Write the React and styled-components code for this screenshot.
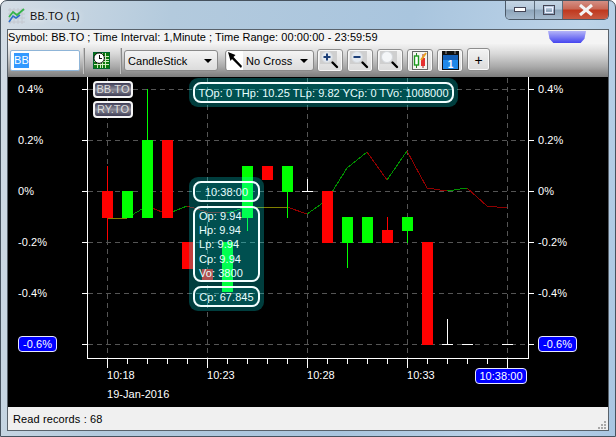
import React from "react";
import styled, { createGlobalStyle } from "styled-components";

const Global = createGlobalStyle`
  html, body { margin: 0; padding: 0; background: #fff; }
  * { box-sizing: border-box; }
`;

const uiFont = `"Liberation Sans", Arial, sans-serif`;

const Win = styled.div`
  width: 616px; height: 437px; display: flex; flex-direction: column;
  padding: 0 6px 5px; overflow: hidden;
  border: 1px solid #46525e; border-radius: 7px 7px 0 0;
  font-family: ${uiFont}; font-size: 11px; letter-spacing: 0.05px; color: #000;
  background: linear-gradient(100deg, #d4dde5 0%, #b3cadd 25%, #a9c5de 60%, #bcd3e8 85%, #a9c6e2 100%);
`;
const TitleBar = styled.div`
  height: 28px; flex: none; display: flex; align-items: flex-start; justify-content: space-between;
`;
const TitleLeft = styled.div`
  display: flex; align-items: center; gap: 5px; padding: 6px 0 0 1px;
  font-size: 11px; color: #111; text-shadow: 0 0 6px #fff;
`;
const Controls = styled.div`
  display: flex; height: 20px; margin-top: -1px; border: 1px solid #4c5a68; border-top: 0;
  border-radius: 0 0 5px 5px; overflow: hidden;
`;
const Ctl = styled.div`
  width: ${p => p.$w}px; display: flex; align-items: center; justify-content: center;
  background: ${p => p.$red
    ? "linear-gradient(#d5948a 0%, #c86a58 45%, #c0391f 55%, #c85a42 100%)"
    : "linear-gradient(#c6d6e5 0%, #b5c9db 45%, #8fa6bb 55%, #a5bace 100%)"};
  border-left: ${p => p.$first ? "0" : "1px solid #5d6c7a"};
`;
const Content = styled.div`
  position: relative; flex: 1; display: flex; flex-direction: column; border: 1px solid #59626b; background: #f0f0f0;
`;
const InfoBar = styled.div`
  height: 14px; flex: none; line-height: 14px; white-space: nowrap; background: #f4f4f4;
`;
const Notch = styled.div`
  position: absolute; top: 1px; right: 22px; width: 38px; height: 12px;
  background: linear-gradient(#b4b4f8, #4545ef);
  clip-path: polygon(0 0, 100% 0, 96% 65%, 86% 100%, 14% 100%, 4% 65%);
`;
const Toolbar = styled.div`
  height: 33px; flex: none; display: flex; align-items: center; padding-left: 2px;
  background: linear-gradient(#f2f2f2 0%, #d8d8d8 30%, #a8a8a8 70%, #7c7c7c 100%);
`;
const FakeInput = styled.div`
  width: 70px; height: 21px; background: #fff; border: 1px solid #8fb5d8; border-radius: 2px;
  padding: 2px 3px; line-height: 15px;
`;
const Sel = styled.span`
  background: #3399ff; color: #fff; display: inline-block; height: 15px;
`;
const Sep = styled.div`
  width: 1px; height: 26px; background: #c4c4c4; margin-left: ${p => p.$ml}px; box-shadow: 1px 0 0 #8a8a8a;
`;
const Slot = styled.div`
  margin-left: ${p => p.$ml}px; display: flex;
`;
const Select = styled.div`
  width: ${p => p.$w}px; height: 21px; margin-left: ${p => p.$ml}px; display: flex; align-items: center; gap: 3px;
  border: 1px solid #8a8a8a; border-radius: 3px; background: linear-gradient(#f4f4f4, #dcdcdc);
  padding: 0 5px 0 ${p => p.$pl}px; white-space: nowrap;
`;
const Caret = styled.div`
  margin-left: auto; width: 0; height: 0; border-left: 4px solid transparent; border-right: 4px solid transparent; border-top: 4px solid #000;
`;
const Buttons = styled.div`
  display: flex; gap: 4px; margin-left: 3px;
`;
const Btn = styled.div`
  width: ${p => p.$w || 26}px; height: 23px; display: flex; align-items: center; justify-content: center;
  border: 1px solid #8d8d8d; border-radius: 3px; background: linear-gradient(#f3f3f3, #dadada);
  box-shadow: inset 0 0 0 1px #f8f8f8; font-size: 14px; margin-top: ${p => p.$up ? -1 : 0}px;
`;
const Chart = styled.div`
  position: relative; height: 330px; flex: none; background: #000; color: #fff;
`;
const ChartSvg = styled.svg`
  display: block; width: 600px; height: 330px;
  text { font-family: ${uiFont}; font-size: 11px; fill: #fff; }
`;
const Legend = styled.div`
  position: absolute; left: 85px; top: 4px; display: flex; flex-direction: column; gap: 3px;
`;
const LegendBtn = styled.div`
  width: 40px; height: 17px; border: 2px solid #f4f4f4; border-radius: 4px; color: #ddd; line-height: 13px; text-align: center;
  background: linear-gradient(#3d3c55, #8a8a96 50%, #3e3d55);
`;
const Bubble = styled.div`
  position: absolute; left: ${p => p.$x}px; top: ${p => p.$y}px; width: ${p => p.$w}px;
  padding: 4px; display: flex; flex-direction: column; gap: 4px; border-radius: 9px;
  background: rgba(0, 255, 255, 0.24); color: #e8ffff;
`;
const BubbleBox = styled.div`
  height: ${p => p.$h}px; border: 2px solid #f2ffff; border-radius: 8px; background: rgba(0, 255, 255, 0.1);
  display: flex; flex-direction: column; justify-content: center; text-align: ${p => p.$left ? "left" : "center"};
  padding: ${p => p.$left ? "1px 0 0 4px" : "0"}; white-space: nowrap;
`;
const Row = styled.div`
  line-height: 14.3px;
`;
const Tag = styled.div`
  position: absolute; left: ${p => p.$x}px; top: ${p => p.$y}px; width: ${p => p.$w}px; height: 16px;
  background: #0000ff; color: #fff; border: 1px solid #e8e8ff; border-radius: 4px; line-height: 14px; text-align: center;
`;
const Status = styled.div`
  flex: 1; display: flex; align-items: center; justify-content: space-between; padding: 1px 1px 0 5px; letter-spacing: .12px; background: #f0f0f0;
`;
const Grip = styled.svg`
  align-self: flex-end;
`;

const G = "#00ff00", R = "#ff0000", W = "#ffffff";
// x, open-top, body-bottom, wick-top, wick-bottom, colour
const candles = [
  [102, 191, 218, 166, 240, R],
  [122, 191, 218, 191, 218, G],
  [142, 140, 218, 89, 218, G],
  [162, 140, 218, 140, 218, R],
  [182, 242, 269, 242, 269, R],
  [202, 269, 281, 269, 281, R],
  [222, 242, 292, 242, 292, G],
  [242, 166, 218, 166, 231, G],
  [262, 166, 180, 166, 180, R],
  [282, 166, 192, 166, 218, G],
  [302, 191, 192, 179, 192, W],
  [322, 191, 243, 191, 243, R],
  [342, 217, 243, 217, 268, G],
  [362, 217, 243, 217, 243, G],
  [382, 230, 243, 217, 243, R],
  [402, 217, 231, 217, 243, G],
  [422, 242, 345, 242, 345, R],
  [442, 344, 345, 319, 345, W],
  [462, 344, 345, 344, 345, W],
  [502, 344, 345, 344, 345, W],
];
const line = [[107,218],[127,218],[147,206],[167,214],[187,206],[207,212],[227,213],[247,207],[287,207],[307,214],[327,200],[347,168],[367,152],[387,180],[407,151],[427,188],[447,191],[467,188],[487,206],[507,208]];
const ys = [[89,"0.4%"],[140,"0.2%"],[191,"0%"],[242,"-0.2%"],[293,"-0.4%"]];
const allY = [89,140,191,242,293,344];
const majorX = [107,207,307,407,507];
const ticks = Array.from({ length: 21 }, (_, i) => 107 + i * 20);
const xLabels = [[107,"10:18"],[207,"10:23"],[307,"10:28"],[407,"10:33"]];

const Logo = () => (
  <svg width="17" height="18" viewBox="0 0 17 18">
    <g stroke="#c4c8d0" strokeWidth="1">
      {[2,6,10,14].map(v => <path key={v} d={`M${v} 1V17M0 ${v+1}H17`} />)}
    </g>
    <path d="M1 15L5 9L8 11L12 8" stroke="#2f6fc8" strokeWidth="1.6" fill="none" />
    <path d="M1 10L5 5L9 8L16 2" stroke="#37b44a" strokeWidth="1.8" fill="none" />
  </svg>
);
const ClockGrid = () => (
  <svg width="17" height="17" viewBox="0 0 18 18" shapeRendering="crispEdges">
    <rect x=".5" y=".5" width="17" height="17" fill="#0c7a0c" stroke="#063" />
    {[4,7,10,13].map(v => <path key={v} d={`M${v}.5 1V17M1 ${v}.5H17`} stroke="#d8f0c8" />)}
    <circle cx="6.5" cy="6.5" r="5.5" fill="#fff" stroke="#000" shapeRendering="auto" />
    <path d="M6.5 3V7H10" stroke="#000" fill="none" />
  </svg>
);
const ArrowIcon = () => (
  <svg width="16" height="19" viewBox="0 0 16 19">
    <rect width="16" height="19" fill="#fff" />
    <path d="M1 1L8.5 4L6.5 6L15 15L14 17L5 8L3.5 10Z" fill="#000" />
  </svg>
);
const Magnifier = ({ sign }) => (
  <svg width="20" height="19" viewBox="0 0 20 19">
    <rect x="0" y="0" width="17" height="13" fill="#cfcfcf" />
    <circle cx="7" cy="6" r="5.5" fill={sign ? "#e4e9ef" : "#f4f6f8"} stroke="#d4d8dc" />
    {sign && <path d={sign === "+" ? "M3.5 6H10.5M7 2.5V9.5" : "M3.5 6H10.5"} stroke="#1c3f78" strokeWidth="2" />}
    <path d="M12.5 11.5L17 16" stroke="#000" strokeWidth="2.4" strokeLinecap="round" />
  </svg>
);
const CandleIcon = () => (
  <svg width="16" height="19" viewBox="0 0 16 19">
    <rect x=".5" y=".5" width="15" height="18" fill="#f4f4f0" stroke="#666" />
    <path d="M4.5 2V17" stroke="#2a7a2a" />
    <rect x="2.5" y="5" width="4" height="9" fill="#fff" stroke="#1d9a1d" strokeWidth="1.4" />
    <path d="M11 3V17" stroke="#a02020" />
    <rect x="9" y="7" width="4" height="8" fill="#e63030" />
    <path d="M9 9L14 2" stroke="#e8a020" strokeWidth="2" />
  </svg>
);
const CalIcon = () => (
  <svg width="17" height="19" viewBox="0 0 17 19">
    <rect width="17" height="19" fill="#111" />
    <rect x="1" y="4" width="15" height="14" fill="#1e88e8" />
    <rect x="1" y="4" width="15" height="5" fill="#1460b8" />
    <path d="M4 0V3M13 0V3" stroke="#999" />
    <text x="8.5" y="16.5" textAnchor="middle" fontSize="10" fontWeight="700" fill="#fff" fontFamily="Liberation Sans">1</text>
  </svg>
);

export default function App() {
  return (
    <Win>
      <Global />
      <TitleBar>
        <TitleLeft><Logo /><span>BB.TO (1)</span></TitleLeft>
        <Controls>
          <Ctl $w={28} $first><svg width="12" height="5"><rect x=".5" y=".5" width="11" height="4" fill="#fff" stroke="#445" /></svg></Ctl>
          <Ctl $w={28}><svg width="12" height="10"><rect x=".5" y=".5" width="11" height="9" fill="none" stroke="#445" /><rect x="2.5" y="2.5" width="7" height="5" fill="none" stroke="#eef" /></svg></Ctl>
          <Ctl $w={46} $red><svg width="16" height="12" viewBox="0 0 16 12"><path d="M2 1L14 11M14 1L2 11" stroke="#f4f4f4" strokeWidth="3" /></svg></Ctl>
        </Controls>
      </TitleBar>
      <Content>
        <Notch />
        <InfoBar>Symbol: BB.TO ; Time Interval: 1,Minute ; Time Range: 00:00:00 - 23:59:59</InfoBar>
        <Toolbar>
          <FakeInput><Sel>BB</Sel></FakeInput>
          <Sep $ml={3} />
          <Slot $ml={9}><ClockGrid /></Slot>
          <Sep $ml={10} />
          <Select $w={94} $ml={3} $pl={3}>CandleStick<Caret /></Select>
          <Select $w={89} $ml={7} $pl={1}><ArrowIcon />No Cross<Caret /></Select>
          <Buttons>
            <Btn><Magnifier sign="+" /></Btn>
            <Btn><Magnifier sign="-" /></Btn>
            <Btn><Magnifier /></Btn>
            <Btn><CandleIcon /></Btn>
            <Btn><CalIcon /></Btn>
            <Btn $w={23} $up>+</Btn>
          </Buttons>
        </Toolbar>
        <Chart>
          <ChartSvg viewBox="8 77 600 330">
            <g shapeRendering="crispEdges">
              {allY.map(y => <path key={y} d={`M88 ${y}.5H528`} stroke="#555" strokeDasharray="5 4" />)}
              {majorX.map(x => <path key={x} d={`M${x}.5 78V358`} stroke="#555" strokeDasharray="5 4" />)}
              {line.slice(1).map((p, i) => {
                const q = line[i];
                const c = p[1] < q[1] ? "#009000" : p[1] > q[1] ? "#900000" : "#808000";
                return <line key={i} x1={q[0]} y1={q[1]} x2={p[0]} y2={p[1]} stroke={c} />;
              })}
              {candles.map(([x, t, b, wt, wb, c]) => (
                <g key={x}>
                  <rect x={x + 5} y={wt} width="1" height={wb - wt} fill={c} />
                  <rect x={x} y={t} width="11" height={b - t} fill={c} />
                </g>
              ))}
              <path d="M87.5 77V358.5H528.5V77" fill="none" stroke="#fff" />
              {allY.map(y => <path key={y} d={`M82 ${y}.5H87M529 ${y}.5H534`} stroke="#fff" />)}
              {ticks.map(x => <path key={x} d={`M${x}.5 359V${x % 100 === 7 ? 368 : 364}`} stroke="#fff" />)}
            </g>
            {ys.map(([y, t]) => (
              <g key={t}>
                <text x="18" y={y + 4}>{t}</text>
                <text x="538" y={y + 4}>{t}</text>
              </g>
            ))}
            {xLabels.map(([x, t]) => <text key={t} x={x} y="379">{t}</text>)}
            <text x="107" y="398">19-Jan-2016</text>
          </ChartSvg>
          <Legend>
            <LegendBtn>BB.TO</LegendBtn>
            <LegendBtn>RY.TO</LegendBtn>
          </Legend>
          <Bubble $x={181} $y={1} $w={269}>
            <BubbleBox $h={21}>TOp: 0 THp: 10.25 TLp: 9.82 YCp: 0 TVo: 1008000</BubbleBox>
          </Bubble>
          <Bubble $x={181} $y={100} $w={75}>
            <BubbleBox $h={21}>10:38:00</BubbleBox>
            <BubbleBox $h={76} $left>
              <Row>Op: 9.94</Row>
              <Row>Hp: 9.94</Row>
              <Row>Lp: 9.94</Row>
              <Row>Cp: 9.94</Row>
              <Row>Vo: 3800</Row>
            </BubbleBox>
            <BubbleBox $h={21}>Cp: 67.845</BubbleBox>
          </Bubble>
          <Tag $x={10} $y={259} $w={39}>-0.6%</Tag>
          <Tag $x={530} $y={259} $w={39}>-0.6%</Tag>
          <Tag $x={467} $y={291} $w={52}>10:38:00</Tag>
        </Chart>
        <Status>
          <span>Read records : 68</span>
          <Grip width="9" height="9" viewBox="0 0 9 9" shapeRendering="crispEdges">
            {[[6,0],[3,3],[6,3],[0,6],[3,6],[6,6]].map(([x, y]) => <rect key={`${x}${y}`} x={x} y={y} width="2" height="2" fill="#a8a8a8" />)}
          </Grip>
        </Status>
      </Content>
    </Win>
  );
}
